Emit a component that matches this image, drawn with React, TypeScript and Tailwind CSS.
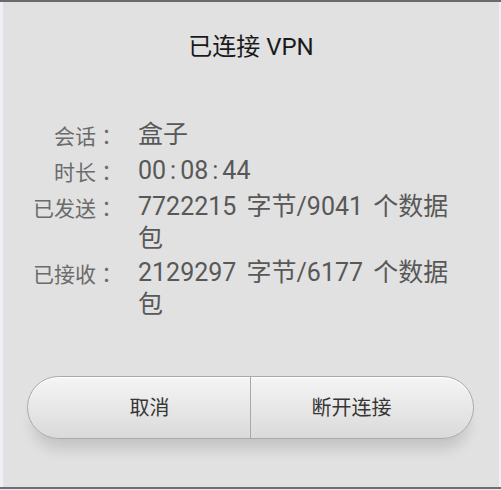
import React from "react";

const Colon = () => <span className="mx-[4px]">:</span>;

const rows: { label: string; value: React.ReactNode }[] = [
  { label: "会话", value: "盒子" },
  {
    label: "时长",
    value: (
      <>
        00<Colon />08<Colon />44
      </>
    ),
  },
  { label: "已发送", value: "7722215 字节/9041 个数据包" },
  { label: "已接收", value: "2129297 字节/6177 个数据包" },
];

export default function App() {
  return (
    <div className="w-[501px] h-[490px] flex flex-col bg-[#e6e6ee] font-['Roboto','Noto_Sans_CJK_SC',sans-serif] overflow-hidden">
      <div className="h-[2px] bg-[#6a6a6a]" />
      <div className="flex flex-1">
        <div className="w-[3px] bg-[#eef0f5]" />
        <div className="flex-1 bg-[#e1e1e1] flex flex-col">
          <div className="mt-[30px] h-[30px] leading-[30px] text-center text-[24px] text-[#1a1a1a]">
            已连接 VPN
          </div>
          <div className="mt-[57px] flex flex-col gap-[2px]">
            {rows.map((r) => (
              <div key={r.label} className="flex items-start">
                <div className="w-[114px] text-right text-[21px] leading-[32px] text-[#6b6b6b]">
                  {r.label}
                  <span className="font-['Noto_Sans_CJK_TC',sans-serif]">：</span>
                </div>
                <div className="ml-[21px] w-[325px] text-[25px] leading-[32px] text-[#585858] [word-spacing:4px]">
                  {r.value}
                </div>
              </div>
            ))}
          </div>
          <div className="mt-[55px] ml-[24px] w-[447px] h-[63px] flex rounded-full border border-[#a9a9a9] bg-gradient-to-b from-[#f5f5f5] to-[#dadada] shadow-[inset_0_1px_0_#ffffff,0_16px_14px_-6px_rgba(0,0,0,0.13)] overflow-hidden">
            <div className="flex-1 flex items-center justify-center pl-[21px] text-[20px] text-[#363636]">
              取消
            </div>
            <div className="w-px bg-[#a8a8a8]" />
            <div className="flex-1 flex items-center justify-center pr-[21px] text-[20px] text-[#363636]">
              断开连接
            </div>
          </div>
        </div>
        <div className="w-[2px] bg-[#eef0f5]" />
      </div>
      <div className="h-[2px] bg-[#6e6e6e]" />
      <div className="h-[1px] bg-[#ebe6f2]" />
    </div>
  );
}
